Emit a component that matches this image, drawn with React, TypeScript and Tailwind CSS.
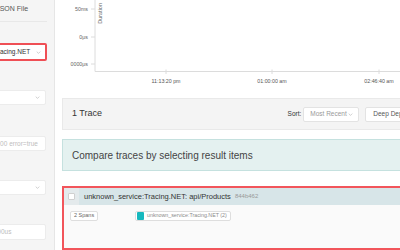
import React from 'react';

const Chevron = () => (
  <svg viewBox="0 0 8 5" className="w-[5px] h-[3px] text-[#bfbfbf] shrink-0" fill="none" stroke="currentColor" strokeWidth="1.2">
    <path d="M1 1l3 3 3-3" />
  </svg>
);

const Sidebar = () => (
  <aside className="w-[55px] shrink-0 h-full bg-[#f5f5f5] border-r border-[#e6e6e6] overflow-hidden">
    <div className="flex flex-col -ml-[70px] w-[117px]">
      <div className="flex items-center h-[22px] pb-[2px] border-b border-[#e8e8e8] text-[7px] text-[#555] whitespace-nowrap">
        <span className="ml-[20px] text-[#1890ff]">Search</span>
        <span className="ml-[24px]">JSON File</span>
      </div>

      {/* Service */}
      <div className="mt-[21px] h-[18px] flex items-center justify-between bg-white border-2 border-[#ef4f55] rounded-[2px] pl-[10px] pr-[4px]">
        <span className="text-[6.5px] text-[#333] whitespace-nowrap">unknown_service:Tracing.NET</span>
        <Chevron />
      </div>

      {/* Operation */}
      <div className="mt-[29px] h-[15px] w-[116px] flex items-center justify-between bg-white border border-[#ececec] rounded-[2px] pl-[9px] pr-[5px]">
        <span className="text-[6.5px] text-[#333]">all</span>
        <Chevron />
      </div>

      {/* Tags */}
      <div className="mt-[31px] h-[15px] w-[116px] flex items-center bg-white border border-[#ececec] rounded-[2px] pl-[14px]">
        <span className="text-[6.5px] text-[#bdbdbd] whitespace-nowrap">http.status_code=200 error=true</span>
      </div>

      {/* Lookback */}
      <div className="mt-[29px] h-[15px] w-[116px] flex items-center justify-between bg-white border border-[#ececec] rounded-[2px] pl-[9px] pr-[5px]">
        <span className="text-[6.5px] text-[#333]">Last Hour</span>
        <Chevron />
      </div>

      {/* Min duration */}
      <div className="mt-[29px] h-[16px] w-[116px] flex items-center bg-white border border-[#ececec] rounded-[2px] pl-[11px]">
        <span className="text-[6.5px] text-[#bdbdbd] whitespace-nowrap">e.g. 1.2s, 100ms, 500us</span>
      </div>
    </div>
  </aside>
);

const ScatterPlot = () => {
  const yTicks = [
    { y: 9, label: '50ms' },
    { y: 37, label: '0μs' },
    { y: 64, label: '0000μs' },
  ];
  const xTicks = [
    { x: 104, label: '11:13:20 pm' },
    { x: 210, label: '01:00:00 am' },
    { x: 317, label: '02:46:40 am' },
  ];
  return (
    <div className="h-[98px] shrink-0 bg-white">
      <svg width="404" height="98" className="block" fontFamily="'Liberation Sans', Arial, sans-serif">
        <line x1="33" y1="0" x2="33" y2="71.5" stroke="#dcdcdc" />
        <line x1="33" y1="71.5" x2="404" y2="71.5" stroke="#dcdcdc" />
        {yTicks.map((t) => (
          <g key={t.label}>
            <line x1="29" y1={t.y} x2="33" y2={t.y} stroke="#dcdcdc" />
            <text x="26" y={t.y + 1.8} textAnchor="end" fontSize="5.3" fill="#666">
              {t.label}
            </text>
          </g>
        ))}
        {xTicks.map((t) => (
          <g key={t.label}>
            <line x1={t.x} y1="69.5" x2={t.x} y2="74" stroke="#dcdcdc" />
            <text x={t.x} y="82.5" textAnchor="middle" fontSize="5.3" fill="#555">
              {t.label}
            </text>
          </g>
        ))}
        <text transform="translate(39.5,3) rotate(-90)" textAnchor="end" fontSize="5.5" fill="#666">
          Duration
        </text>
      </svg>
    </div>
  );
};

const ResultsHeader = () => (
  <div className="h-[32px] shrink-0 flex items-center justify-between bg-[#f4f4f4] border border-[#e9e9e9] pl-[9px] pr-[10px]">
    <span className="text-[9px] text-[#333]">1 Trace</span>
    <div className="flex items-center">
      <span className="text-[6.5px] text-[#333] mr-[2px]">Sort:</span>
      <div className="w-[56px] h-[15px] flex items-center justify-between bg-white border border-[#e3e3e3] rounded-[2px] pl-[6px] pr-[5px]">
        <span className="text-[6.5px] text-[#999] whitespace-nowrap">Most Recent</span>
        <Chevron />
      </div>
      <button className="ml-[6px] h-[15px] px-[7px] bg-white border border-[#e3e3e3] rounded-[2px] text-[6.5px] text-[#555] whitespace-nowrap">
        Deep Dependency Graph
      </button>
    </div>
  </div>
);

const CompareBanner = () => (
  <div className="mt-[9px] h-[32px] shrink-0 flex items-center px-[9px] bg-[#e4f1f0] border border-[#c5e1df] text-[10px] text-[#444] whitespace-nowrap">
    Compare traces by selecting result items
  </div>
);

const TraceItem = () => (
  <div className="mt-[15px] h-[64px] shrink-0 flex flex-col border-2 border-[#f2555b]">
    <div className="h-[17px] flex items-center bg-[#d7e5e8] whitespace-nowrap">
      <div className="w-[15px] h-full flex items-center justify-center bg-[#e4eaec]">
        <div className="w-[7px] h-[7px] bg-white border border-[#d0d0d0] rounded-[1px]" />
      </div>
      <span className="ml-[5px] text-[7.5px] text-[#333]">unknown_service:Tracing.NET: api/Products</span>
      <span className="ml-[4px] text-[6px] text-[#999]">844b462</span>
    </div>
    <div className="flex-1 bg-[#fafafa] pt-[6px] pl-[6px] flex items-start leading-none">
      <div className="w-[65px] shrink-0 flex">
        <span className="flex items-center h-[10px] px-[3px] bg-white border border-[#dedede] rounded-[2px] text-[5.5px] text-[#666]">
          2 Spans
        </span>
      </div>
      <span className="flex items-center h-[10px] bg-white border border-[#dedede] rounded-[2px] pr-[3px] whitespace-nowrap">
        <span className="w-[7px] h-[8px] ml-[1px] mr-[3px] bg-[#17b8be] rounded-[1px]" />
        <span className="text-[5.3px] text-[#8a8a8a]">unknown_service:Tracing.NET (2)</span>
      </span>
    </div>
  </div>
);

export default function App() {
  return (
    <div className="w-[400px] h-[250px] overflow-hidden bg-white font-['Liberation_Sans',Arial,sans-serif]">
      <div className="flex w-[466px] h-[250px]">
        <Sidebar />
        <main className="flex-1 flex flex-col pl-[7px]">
          <ScatterPlot />
          <ResultsHeader />
          <CompareBanner />
          <TraceItem />
        </main>
      </div>
    </div>
  );
}
